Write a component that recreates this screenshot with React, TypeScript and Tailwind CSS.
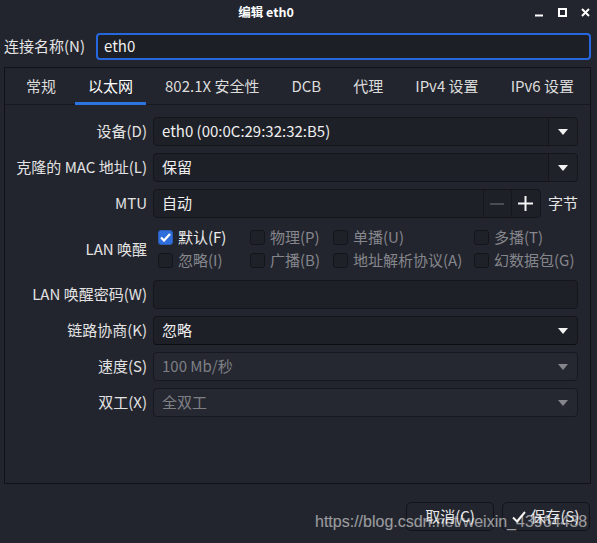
import React from 'react';

const FONT = 'font-["Noto_Sans_CJK_SC","Noto_Sans",sans-serif]';

const Arrow = ({ dim = false }: { dim?: boolean }) => (
  <svg width="10" height="6" viewBox="0 0 10 6" className="block">
    <path d="M0 0h10L5 6z" fill={dim ? '#85868c' : '#f2f2f2'} />
  </svg>
);

const Check = ({ label, checked = false, dim = false }: { label: string; checked?: boolean; dim?: boolean }) => (
  <div className="flex items-center gap-[5px] h-[23px]">
    {checked ? (
      <span className="w-[15px] h-[15px] rounded-[3px] bg-[#2e6fdc] border border-[#2a5cb6] flex items-center justify-center">
        <svg width="11" height="9" viewBox="0 0 11 9">
          <path d="M1 4.5l3 3L10 1" stroke="#fff" strokeWidth="2.2" fill="none" />
        </svg>
      </span>
    ) : (
      <span className="w-[15px] h-[15px] rounded-[3px] bg-[#1f2129] border border-[#14151a]" />
    )}
    <span className={dim ? 'text-[#85868c]' : 'text-[#ececec]'}>{label}</span>
  </div>
);

const Label = ({ children }: { children: React.ReactNode }) => (
  <div className="flex items-center justify-end text-[#e2e2e2]">{children}</div>
);

export default function App() {
  const tabs = ['常规', '以太网', '802.1X 安全性', 'DCB', '代理', 'IPv4 设置', 'IPv6 设置'];

  return (
    <div className={`relative w-[597px] h-[543px] overflow-hidden bg-[#23252e] text-[15px] text-[#e6e6e6] ${FONT}`}>
      {/* Title bar */}
      <div className="flex items-center h-[24px]">
        <div className="flex-1 text-center text-[12.5px] font-bold text-white">编辑 eth0</div>
        <div className="w-[65px] flex justify-end items-center gap-[14px] pr-[7px]">
          <svg width="9" height="9" viewBox="0 0 9 9"><path d="M0 7.5h8" stroke="#fff" strokeWidth="2" /></svg>
          <svg width="9" height="9" viewBox="0 0 9 9"><rect x="1" y="1" width="7" height="7" stroke="#fff" strokeWidth="2" fill="none" /></svg>
          <svg width="9" height="9" viewBox="0 0 9 9"><path d="M1 1l7 7M8 1L1 8" stroke="#fff" strokeWidth="2" /></svg>
        </div>
      </div>

      {/* Connection name */}
      <div className="flex items-center mt-[9px] pl-[4px] pr-[6px] h-[26px]">
        <span className="w-[92px] text-[#e6e6e6]">连接名称(N)</span>
        <div className="flex-1 h-[27px] rounded-[4px] border-2 border-[#2467de] bg-[#1d1f26] flex items-center pl-[6px] text-[#f0f0f0]">
          eth0
        </div>
      </div>

      {/* Notebook */}
      <div className="ml-[4px] mt-[8px] w-[587px] h-[417px] border border-[#111216]">
        <div className="flex h-[37px] pl-[8px] gap-[6px] border-b border-[#17181d]">
          {tabs.map((t, i) => (
            <div
              key={t}
              className={`relative flex items-center px-[13px] ${i === 1 ? 'text-white' : 'text-[#dcdcdc]'}`}
            >
              {t}
              {i === 1 && <div className="absolute left-0 right-0 bottom-[-1px] h-[3px] bg-[#2b74e2]" />}
            </div>
          ))}
        </div>

        <div className="grid grid-cols-[142px_1fr] gap-x-[6px] gap-y-[7px] pt-[12px] pr-[12px]">
          <Label>设备(D)</Label>
          <div className="flex h-[29px] rounded-[4px] border border-[#15161b] bg-[#1e2028]">
            <div className="flex-1 flex items-center pl-[8px] text-[#efefef]">eth0 (00:0C:29:32:32:B5)</div>
            <div className="w-[29px] flex items-center justify-center border-l border-[#15161b] bg-[#20222a] rounded-r-[4px]">
              <Arrow />
            </div>
          </div>

          <Label>克隆的 MAC 地址(L)</Label>
          <div className="flex h-[29px] rounded-[4px] border border-[#15161b] bg-[#1e2028]">
            <div className="flex-1 flex items-center pl-[8px] text-[#efefef]">保留</div>
            <div className="w-[29px] flex items-center justify-center border-l border-[#15161b] bg-[#20222a] rounded-r-[4px]">
              <Arrow />
            </div>
          </div>

          <Label>MTU</Label>
          <div className="flex items-center gap-[7px] h-[29px]">
            <div className="flex-1 flex h-[29px] rounded-[4px] border border-[#15161b] bg-[#1e2028]">
              <div className="flex-1 flex items-center pl-[8px] text-[#efefef]">自动</div>
              <div className="w-[28px] flex items-center justify-center border-l border-[#17181d]">
                <svg width="14" height="2" viewBox="0 0 14 2"><path d="M0 1h14" stroke="#4a4c54" strokeWidth="2" /></svg>
              </div>
              <div className="w-[29px] flex items-center justify-center border-l border-[#17181d]">
                <svg width="15" height="15" viewBox="0 0 15 15"><path d="M0 7.5h15M7.5 0v15" stroke="#f4f4f4" strokeWidth="2" /></svg>
              </div>
            </div>
            <span className="shrink-0 whitespace-nowrap text-[#e6e6e6]">字节</span>
          </div>

          <Label>LAN 唤醒</Label>
          <div className="grid grid-cols-[92px_83px_141px_1fr] pl-[5px] py-[1px]">
            <Check label="默认(F)" checked />
            <Check label="物理(P)" dim />
            <Check label="单播(U)" dim />
            <Check label="多播(T)" dim />
            <Check label="忽略(I)" dim />
            <Check label="广播(B)" dim />
            <Check label="地址解析协议(A)" dim />
            <Check label="幻数据包(G)" dim />
          </div>

          <Label>LAN 唤醒密码(W)</Label>
          <div className="h-[29px] rounded-[4px] border border-[#15161b] bg-[#1e2028]" />

          <Label>链路协商(K)</Label>
          <div className="flex items-center justify-between h-[29px] rounded-[4px] border border-[#15161b] border-b-[#0c0d10] bg-[#1e2028] pl-[8px] pr-[9px] text-[#efefef]">
            忽略
            <Arrow />
          </div>

          <Label>速度(S)</Label>
          <div className="flex items-center justify-between h-[29px] rounded-[4px] border border-[#17181d] bg-[#262831] pl-[8px] pr-[9px] text-[#7f8086]">
            100 Mb/秒
            <Arrow dim />
          </div>

          <Label>双工(X)</Label>
          <div className="flex items-center justify-between h-[29px] rounded-[4px] border border-[#17181d] bg-[#262831] pl-[8px] pr-[9px] text-[#7f8086]">
            全双工
            <Arrow dim />
          </div>
        </div>
      </div>

      {/* Buttons */}
      <div className="flex justify-end gap-[8px] mt-[18px] pr-[7px]">
        <button className="w-[88px] h-[29px] rounded-[5px] border border-[#121318] bg-[#23252e] text-[#e6e6e6]">
          取消(C)
        </button>
        <button className="w-[88px] h-[29px] rounded-[5px] border border-[#121318] bg-[#23252e] text-[#e6e6e6] flex items-center justify-center gap-[4px]">
          <svg width="14" height="12" viewBox="0 0 14 12"><path d="M1 6.5l4 4L13 1" stroke="#f2f2f2" strokeWidth="2" fill="none" /></svg>
          保存(S)
        </button>
      </div>

      {/* Watermark */}
      <div className='absolute left-[315px] top-[512px] text-[16px] leading-[20px] text-white/55 font-["Liberation_Sans",Arial,sans-serif] pointer-events-none'>
        https://blog.csdn.net/weixin_43964438
      </div>
    </div>
  );
}
